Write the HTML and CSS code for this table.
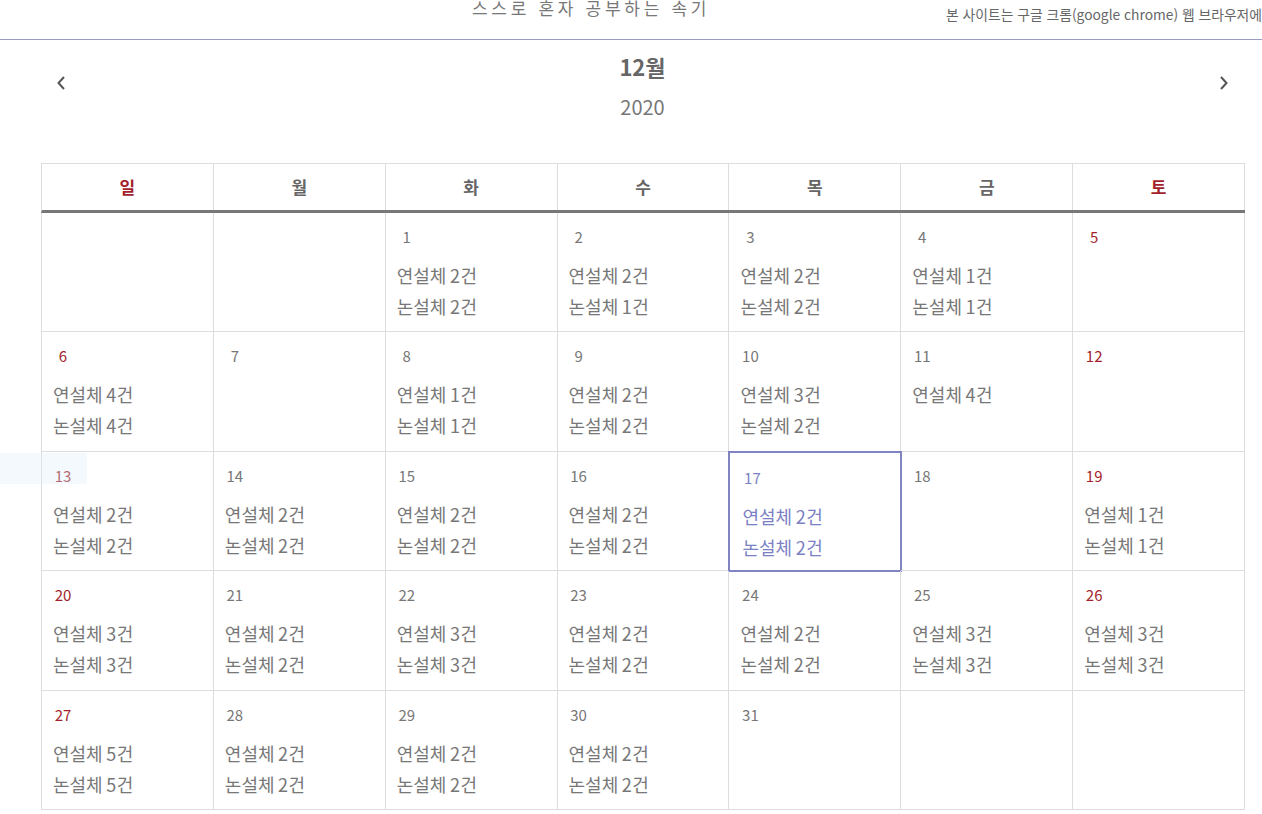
FILE: index.html
```html
<!DOCTYPE html>
<html lang="ko">
<head>
    <meta charset="UTF-8">
    <title>스스로 혼자 공부하는 속기</title>
    <link rel="stylesheet" href="styles.css">
</head>
<body>
    <div class="topbar">
        <div class="site-title">스스로 혼자 공부하는 속기</div>
        <div class="notice">본 사이트는 구글 크롬(google chrome) 웹 브라우저에</div>
    </div>

    <div class="month-nav">
        <a href="#" class="nav-arrow">
            <svg width="10" height="16" viewBox="0 0 10 16"><path d="M8 2 L2.5 8 L8 14" fill="none" stroke="#555" stroke-width="2"/></svg>
        </a>
        <div class="month-title">
            <div class="month">12월</div>
            <div class="year">2020</div>
        </div>
        <a href="#" class="nav-arrow">
            <svg width="10" height="16" viewBox="0 0 10 16"><path d="M2 2 L7.5 8 L2 14" fill="none" stroke="#555" stroke-width="2"/></svg>
        </a>
    </div>

    <div class="calendar">
        <div class="weekdays">
            <div class="wd sun">일</div>
            <div class="wd">월</div>
            <div class="wd">화</div>
            <div class="wd">수</div>
            <div class="wd">목</div>
            <div class="wd">금</div>
            <div class="wd sat">토</div>
        </div>
        <div class="days" id="days"></div>
    </div>

    <div class="hover-ghost"></div>

    <script>
        // 12월 기록 (연설체, 논설체)
        const records = {
            1: [2, 2], 2: [2, 1], 3: [2, 2], 4: [1, 1],
            6: [4, 4], 8: [1, 1], 9: [2, 2], 10: [3, 2], 11: [4, 0],
            13: [2, 2], 14: [2, 2], 15: [2, 2], 16: [2, 2], 17: [2, 2], 19: [1, 1],
            20: [3, 3], 21: [2, 2], 22: [3, 3], 23: [2, 2], 24: [2, 2], 25: [3, 3], 26: [3, 3],
            27: [5, 5], 28: [2, 2], 29: [2, 2], 30: [2, 2]
        };
        const today = 17;
        const firstDay = 2; // 화요일
        const container = document.getElementById('days');

        for (let i = 0; i < 35; i++) {
            const cell = document.createElement('div');
            cell.className = 'day';
            const d = i - firstDay + 1;
            if (d >= 1 && d <= 31) {
                const col = i % 7;
                if (col === 0 || col === 6) cell.classList.add('holiday');
                if (d === today) cell.classList.add('today');
                let html = '<span class="num">' + d + '</span>';
                const r = records[d];
                if (r) {
                    html += '<div class="items">';
                    if (r[0]) html += '<div>연설체 <b>' + r[0] + '</b>건</div>';
                    if (r[1]) html += '<div>논설체 <b>' + r[1] + '</b>건</div>';
                    html += '</div>';
                }
                cell.innerHTML = html;
            }
            container.appendChild(cell);
        }
    </script>
</body>
</html>
```

FILE: styles.css
```css
body {
    margin: 0;
    padding: 0;
    font-family: "Noto Sans CJK KR", "Noto Sans", sans-serif;
    color: #777;
    background-color: #ffffff;
    overflow: hidden;
}

.topbar {
    height: 39px;
    border-bottom: 1px solid #9a9cc6;
    display: flex;
    align-items: flex-start;
    overflow: hidden;
}

.site-title {
    margin-left: 472px;
    margin-top: -5px;
    font-size: 17px;
    letter-spacing: 3.7px;
    color: #777;
    white-space: nowrap;
}

.notice {
    margin-left: auto;
    margin-top: 4px;
    font-size: 13.8px;
    color: #666;
    white-space: nowrap;
}

.month-nav {
    display: flex;
    justify-content: space-between;
    align-items: flex-start;
    height: 123px;
    padding: 0 33px 0 56px;
}

.nav-arrow {
    display: block;
    margin-top: 32px;
    width: 10px;
    height: 16px;
}

.month-title {
    text-align: center;
    margin-top: 10px;
}

.month {
    font-size: 22px;
    font-weight: bold;
    color: #666;
    line-height: 32px;
}

.year {
    font-size: 20px;
    color: #777;
    margin-top: 11px;
    line-height: 28px;
}

.calendar {
    margin-left: 41px;
    width: 1204px;
}

.weekdays {
    display: grid;
    grid-template-columns: repeat(7, 1fr);
    border-top: 1px solid #ddd;
    border-left: 1px solid #ddd;
    border-bottom: 3px solid #777;
}

.wd {
    height: 46px;
    line-height: 46px;
    text-align: center;
    font-size: 17px;
    font-weight: bold;
    color: #666;
    border-right: 1px solid #ddd;
}

.wd.sun, .wd.sat {
    color: #a31f2b;
}

.days {
    display: grid;
    grid-template-columns: repeat(7, 1fr);
    grid-auto-rows: 119.4px;
    border-left: 1px solid #ddd;
}

.day {
    border-right: 1px solid #ddd;
    border-bottom: 1px solid #ddd;
    padding: 9px 0 0 11px;
    font-size: 18px;
    color: #777;
}

.day .num {
    display: inline-block;
    min-width: 20px;
    text-align: center;
    font-size: 15px;
    line-height: 22px;
}

.day.holiday .num {
    color: #a31f2b;
}

.items {
    margin-top: 12px;
    line-height: 31px;
}

.items b {
    font-weight: normal;
    display: inline-block;
    width: 11px;
    margin-left: -2px;
    text-align: center;
}

.day.today {
    outline: 2px solid #8184c2;
    outline-offset: -1px;
    padding: 11px 0 0 13px;
    color: #7b7fc4;
}

.day.today .num {
    color: #7b7fc4;
}

.hover-ghost {
    position: absolute;
    left: 0;
    top: 453px;
    width: 87px;
    height: 31px;
    background-color: rgba(220, 238, 248, 0.35);
}
```
